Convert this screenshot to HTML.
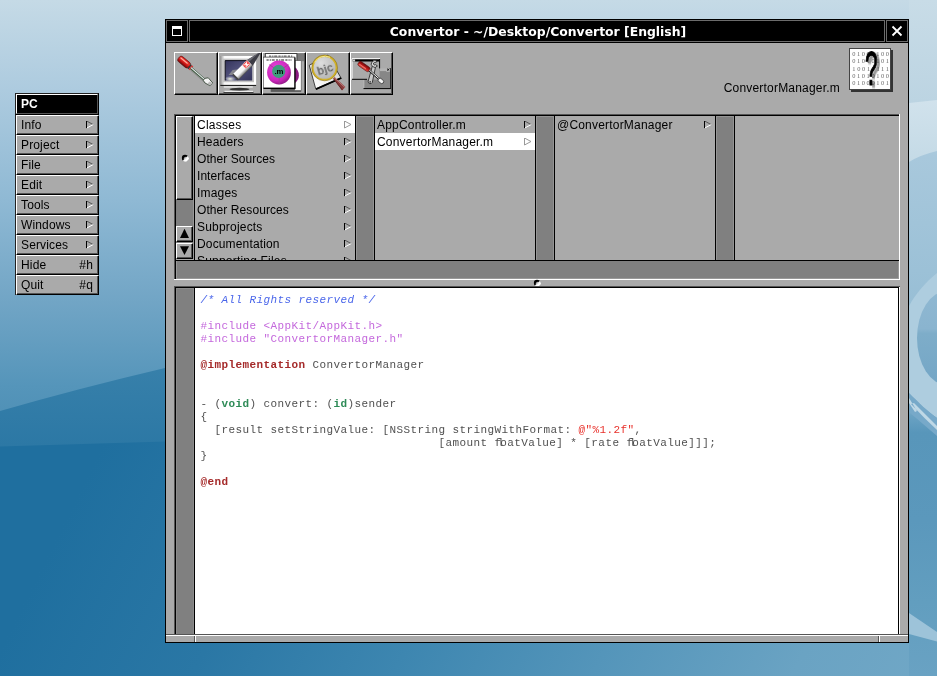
<!DOCTYPE html>
<html><head><meta charset="utf-8"><title>Convertor</title>
<style>
*,*:before,*:after{box-sizing:border-box;margin:0;padding:0}
html,body{width:937px;height:676px;overflow:hidden}
body{position:relative;font-family:"Liberation Sans",sans-serif;font-size:12px;color:#000;background:#3b80aa}
body>div,body>svg,#all>div,#all>svg{position:absolute}
#bg{left:0;top:0;width:937px;height:676px}
/* menu */
.mt{left:15px;top:93px;width:84px;height:22px;background:#000;border:1px solid #222;border-right-color:#000;border-bottom-color:#000;color:#fff;font-weight:bold;font-size:12px;line-height:21px;padding-left:5px}
.mt:after{content:"";position:absolute;left:0;top:0;width:82px;height:20px;border-left:1px solid #fff;border-top:1px solid #fff;border-right:1px solid #555;border-bottom:1px solid #555}
#mshade{left:15px;top:115px;width:1px;height:180px;background:#222}
.mi{left:16px;width:83px;height:20px;letter-spacing:.15px;background:#aaa;border:1px solid #000;border-top-color:#fff;border-left-color:#fff;line-height:19px;padding-left:4px;font-size:12px}
.mi:after,.tool:after,.bez:after{content:"";position:absolute;left:0;top:0;right:0;bottom:0;border-right:1px solid #555;border-bottom:1px solid #555}
.mi .key{position:absolute;right:5px;top:0}
.mi svg{position:absolute;left:69px;top:5px}
/* window */
#win{left:165px;top:19px;width:744px;height:624px;background:#aaa;border:1px solid #000}
#tb{left:166px;top:20px;width:742px;height:23px;background:#000;border-bottom:1px solid #000}
.tbtn{top:20px;height:22px;background:#000;border:1px solid #6c6c6c}
#title{left:189px;top:20px;width:696px;height:22px;border:1px solid #6c6c6c;color:#fff;font-family:"DejaVu Sans",sans-serif;font-weight:bold;font-size:12.4px;text-align:center;line-height:21px;padding-left:2px;white-space:nowrap}
.tool{top:52px;width:44px;height:43px;background:#aaa;border:1px solid #000;border-top-color:#fff;border-left-color:#fff;overflow:hidden}
.tool svg{position:absolute;left:-1px;top:-1px}
#fname{left:640px;top:81px;width:200px;text-align:right;font-size:12px;line-height:14px;letter-spacing:.2px}
/* browser */
.col{top:116px;height:144px;background:#aaa;overflow:hidden}
.row{position:absolute;left:0;right:0;height:17px;line-height:19px;padding-left:2px;font-size:12px;white-space:nowrap;letter-spacing:.2px;overflow:hidden}
.row.sel{background:#fff}
.row svg{position:absolute;left:149px;top:5px}
.slot{background:#808080}
.k0{background:#000}.k5{background:#555}.kf{background:#fff}.ka{background:#aaa}
.bez{background:#aaa;border:1px solid #000;border-top-color:#fff;border-left-color:#fff}
/* editor */
#code{left:195px;top:288px;width:703px;height:346px;background:#fff;overflow:hidden}
pre{position:absolute;left:5.5px;top:6px;font-family:"Liberation Mono",monospace;font-size:11px;letter-spacing:0.4px;line-height:13px;color:#505050}
.c{color:#4a66ea;font-style:italic}
.p{color:#c468dc}
.k{color:#a52a2a;font-weight:bold}
.t{color:#2e8b57;font-weight:bold}
.s{color:#e8302a}
.fl{letter-spacing:-3.7px}
</style></head><body><div id="all" style="left:0;top:0;width:937px;height:676px;will-change:transform">
<svg id="bg" width="937" height="676" viewBox="0 0 937 676">
<defs>
<linearGradient id="g1" gradientUnits="userSpaceOnUse" x1="0" y1="0" x2="0" y2="676"><stop offset="0" stop-color="#c5dae6"/><stop offset="0.133" stop-color="#adcbdf"/><stop offset="0.296" stop-color="#8fb9d4"/><stop offset="0.438" stop-color="#73a6c6"/><stop offset="0.571" stop-color="#5595ba"/><stop offset="0.62" stop-color="#4f90b6"/></linearGradient>
<linearGradient id="g2" gradientUnits="userSpaceOnUse" x1="0" y1="0" x2="2000" y2="1000"><stop offset="0.13" stop-color="#1f6f9f"/><stop offset="0.212" stop-color="#2a77a5"/><stop offset="0.292" stop-color="#3d86b0"/><stop offset="0.372" stop-color="#5495ba"/><stop offset="0.452" stop-color="#6aa3c3"/><stop offset="0.507" stop-color="#70a7c6"/></linearGradient>
<linearGradient id="gb" gradientUnits="userSpaceOnUse" x1="0" y1="368" x2="0" y2="446"><stop offset="0" stop-color="#3780aa"/><stop offset="1" stop-color="#2c78a5"/></linearGradient>
<linearGradient id="g3" gradientUnits="userSpaceOnUse" x1="0" y1="0" x2="0" y2="676"><stop offset="0" stop-color="#c8dce7"/><stop offset="0.15" stop-color="#bcd4e2"/><stop offset="0.232" stop-color="#a8c8dc"/><stop offset="0.4" stop-color="#9cc1d7"/><stop offset="0.6" stop-color="#8db7d0"/><stop offset="0.615" stop-color="#6aa2c3"/><stop offset="0.64" stop-color="#5896ba"/><stop offset="0.77" stop-color="#5b98bc"/><stop offset="0.89" stop-color="#629ebf"/><stop offset="1" stop-color="#69a2c3"/></linearGradient>
<linearGradient id="gw" x1="0" y1="0" x2="0" y2="1"><stop offset="0" stop-color="#d1e2ec"/><stop offset="1" stop-color="#c4dae6"/></linearGradient><linearGradient id="gi" x1="0" y1="0" x2="0" y2="1"><stop offset="0" stop-color="#8fb8d2"/><stop offset=".4" stop-color="#8ab4cf"/><stop offset=".45" stop-color="#7eadc9"/><stop offset="1" stop-color="#74a6c6"/></linearGradient><clipPath id="cr"><rect x="909" y="0" width="28" height="676"/></clipPath>
</defs>
<rect width="937" height="676" fill="url(#g1)"/>
<path d="M0 411Q80 388 165 368V470H0Z" fill="url(#gb)"/>
<path d="M0 446.5L165 441.5V676H0Z" fill="url(#g2)"/>
<rect x="0" y="643" width="937" height="33" fill="url(#g2)"/>
<g clip-path="url(#cr)">
<rect x="909" y="0" width="28" height="676" fill="url(#g3)"/>
<path d="M909 103L937 100V151Q920 155 909 162Z" fill="url(#gw)"/>
<path d="M937 273C927 281 915 294 909 306V393C918 402 928 412 937 418Z" fill="#aecddf"/>
<ellipse cx="947" cy="338" rx="30" ry="47" fill="url(#gi)"/>
<path d="M909 393C918 402 928 412 937 418V436L909 412Z" fill="#77a9c9"/>
<path d="M909 398L917 411L915 412L909 403ZM911 404Q924 418 937 430V426Q925 414 914 403Z" fill="#bfd8e6"/>
<path d="M909 613L937 632V641.5L909 634Z" fill="#9dc3d9"/>
</g>
</svg>

<div class="mt">PC</div><div id="mshade"></div>
<div class="mi" style="top:115px">Info<svg width="9" height="9"><use href="#ar"/></svg></div>
<div class="mi" style="top:135px">Project<svg width="9" height="9"><use href="#ar"/></svg></div>
<div class="mi" style="top:155px">File<svg width="9" height="9"><use href="#ar"/></svg></div>
<div class="mi" style="top:175px">Edit<svg width="9" height="9"><use href="#ar"/></svg></div>
<div class="mi" style="top:195px">Tools<svg width="9" height="9"><use href="#ar"/></svg></div>
<div class="mi" style="top:215px">Windows<svg width="9" height="9"><use href="#ar"/></svg></div>
<div class="mi" style="top:235px">Services<svg width="9" height="9"><use href="#ar"/></svg></div>
<div class="mi" style="top:255px">Hide<span class="key">#h</span></div>
<div class="mi" style="top:275px">Quit<span class="key">#q</span></div>

<svg width="0" height="0" style="left:0;top:0"><defs>
<g id="ar"><path d="M.5 -.2V7.1" stroke="#000" stroke-width="1" fill="none"/><path d="M1 .2L7 3.5" stroke="#555" stroke-width="1" fill="none"/><path d="M1 6.9L7.2 3.6" stroke="#fff" stroke-width="1" fill="none"/></g><g id="ars"><path d="M.5 0V7L7 3.5Z" stroke="#999" stroke-width="1" fill="#fff"/></g>
</defs></svg>

<div id="win"></div>
<div id="tb"></div>
<div class="tbtn" style="left:166px;width:22px"><svg width="20" height="20" style="position:absolute;left:0;top:0"><rect x="5.5" y="6.5" width="9" height="8" fill="none" stroke="#fff"/><rect x="5" y="5" width="10" height="3" fill="#fff"/></svg></div>
<div id="title">Convertor - ~/Desktop/Convertor [English]</div>
<div class="tbtn" style="left:886px;width:22px"><svg width="20" height="20" style="position:absolute;left:0;top:0"><path d="M5.5 5.5L14.5 14.5M14.5 5.5L5.5 14.5" stroke="#fff" stroke-width="1.8" fill="none"/></svg></div>

<div class="tool" style="left:174px"><svg width="44" height="43"><defs><linearGradient id="rh" x1="0" y1="0" x2="1" y2="0"><stop offset="0" stop-color="#6a0808"/><stop offset="0.35" stop-color="#c81414"/><stop offset="0.7" stop-color="#f03a30"/><stop offset="1" stop-color="#d01818"/></linearGradient></defs>
<path d="M17.5 17.5L32 30" stroke="#666" stroke-width="3.2" opacity=".35"/>
<g transform="translate(10.8 10.7) rotate(-50.5)"><rect x="-3.3" y="-7.8" width="6.6" height="13.6" rx="2.4" fill="url(#rh)" stroke="#5a0c0c" stroke-width=".6"/><rect x=".6" y="-6.4" width="1.2" height="9" fill="#ffc0b0" opacity=".85"/><rect x="-2.6" y="5.6" width="5.2" height="1.4" fill="#333"/><rect x="-2.6" y="7" width="5.2" height="1.8" fill="#d83030"/></g>
<path d="M17 16L31 28.2" stroke="#3a5a3a" stroke-width="2.4"/><path d="M17 15.7L31 27.9" stroke="#e8e8f0" stroke-width="1.1"/>
<polygon points="30.6,26.4 34.3,25.8 38.7,31 35.9,33.6 31,31 29.3,28.4" fill="#f4f4f4" stroke="#3c4c3c" stroke-width=".9"/><polygon points="35.6,29.5 38.2,31.2 35.9,33.2 33.5,31.6" fill="#bbb"/>
</svg></div>
<div class="tool" style="left:218px"><svg width="44" height="43"><defs><linearGradient id="scr" x1="0" y1="0" x2="1" y2="1"><stop offset="0" stop-color="#34345c"/><stop offset=".45" stop-color="#50507a"/><stop offset="1" stop-color="#34345a"/></linearGradient><linearGradient id="rk" x1="0" y1="0" x2="0" y2="1"><stop offset="0" stop-color="#fff"/><stop offset=".55" stop-color="#f4f4f4"/><stop offset=".85" stop-color="#999"/><stop offset="1" stop-color="#444"/></linearGradient><linearGradient id="bz" x1="0" y1="0" x2="1" y2="0"><stop offset="0" stop-color="#909090"/><stop offset=".12" stop-color="#f8f8f8"/><stop offset="1" stop-color="#fff"/></linearGradient><radialGradient id="glw" cx=".4" cy=".6" r=".6"><stop offset="0" stop-color="#f4f8e0"/><stop offset="1" stop-color="#c8cce0" stop-opacity="0"/></radialGradient></defs>
<rect x="2.3" y="4" width="35.8" height="29.2" fill="url(#bz)"/>
<rect x="5" y="6.6" width="31" height="23.6" fill="#c4c4c4"/>
<rect x="7.2" y="8.3" width="27" height="20.2" fill="url(#scr)"/><path d="M7.2 28.5V8.6H34.2" fill="none" stroke="#0a0a14" stroke-width=".9"/>
<rect x="2.3" y="32.9" width="35.8" height="1" fill="#111"/>
<rect x="5.8" y="34.2" width="29" height="1.5" fill="#e4e4e4"/>
<ellipse cx="21.5" cy="37.3" rx="10" ry="1.5" fill="#333"/>
<rect x="6.5" y="38.8" width="28.5" height="1.4" fill="#eee"/>
<rect x="5.5" y="40.3" width="30" height="1" fill="#111"/>
<ellipse cx="13.2" cy="26.4" rx="5.4" ry="2.6" fill="url(#glw)"/>
<polygon points="10.6,22.9 14.7,18 21,17.2 17,22.9" fill="#85858c"/>
<g transform="translate(24.8 18) rotate(-45)"><rect x="-10" y="-4" width="20.4" height="8" fill="url(#rk)"/><polygon points="10.2,-4 24.2,-0.6 24.2,0.6 10.2,4" fill="#3c3c44"/><polygon points="10.2,-4 24.2,-0.6 10.2,-1.4" fill="#6a6a72"/><rect x="3.2" y="-3.8" width="6.4" height="5" fill="#f02828" opacity=".9"/><path d="M4 -3.2L8.8 .6M8.8 -3.2L4 .6M6.4 -3.8V1.2" stroke="#fff" stroke-width=".9"/><rect x="-11" y="-4" width="1.8" height="8" fill="#444"/></g>
</svg></div>
<div class="tool" style="left:262px"><svg width="44" height="43"><defs><radialGradient id="mg" cx=".4" cy=".35" r=".75"><stop offset="0" stop-color="#e848dc"/><stop offset=".65" stop-color="#cc28bc"/><stop offset="1" stop-color="#7c1274"/></radialGradient></defs>
<rect x="34.9" y="1.2" width="7.1" height="8" fill="#7a7a7a"/>
<rect x="8.7" y="36.5" width="30.5" height="3.4" fill="#5a5a5a"/>
<rect x="3.3" y="1.6" width="31.6" height="34" fill="#fff" stroke="#222" stroke-width=".8"/>
<path d="M7 4.2H31" stroke="#666" stroke-width="1.3" stroke-dasharray="2.2 1 1.2 .8 3 1.2"/>
<rect x="32.8" y="8.7" width="6.4" height="29.8" fill="#fff" stroke="#555" stroke-width=".6"/>
<path d="M32.6 15A10 10 0 0 1 32.6 31.4Z" fill="#8a1a80"/>
<rect x="1.2" y="5.1" width="31.6" height="31" fill="#fff" stroke="#444" stroke-width=".8"/><path d="M33 5.5V36.4H1.6" fill="none" stroke="#000" stroke-width="1.1"/>
<path d="M4.5 8H29.5" stroke="#666" stroke-width="1.3" stroke-dasharray="2.2 1 1.2 .8 3 1.2"/>
<circle cx="17" cy="20.5" r="11.9" fill="url(#mg)"/>
<path d="M16.7 19.4L7.4 12.6M16.7 19.4L26.4 12.6M17.2 19.4V32.2" stroke="#a04098" stroke-width=".9"/>
<circle cx="16.7" cy="19.4" r="6.6" fill="#3f9c7c"/>
<text x="17" y="21.9" font-family="Liberation Sans,sans-serif" font-weight="bold" font-size="7.8" text-anchor="middle" fill="#000">.m</text>
</svg></div>
<div class="tool" style="left:306px"><svg width="44" height="43"><defs><linearGradient id="pp" x1="0" y1="1" x2=".8" y2="0"><stop offset="0" stop-color="#fff"/><stop offset=".45" stop-color="#f0f0f0"/><stop offset="1" stop-color="#bdbdbd"/></linearGradient><radialGradient id="ln" cx=".35" cy=".3" r=".75"><stop offset="0" stop-color="#dedede"/><stop offset="1" stop-color="#b4b4b4"/></radialGradient><filter id="b4" x="-20%" y="-20%" width="140%" height="140%"><feGaussianBlur stdDeviation=".35"/></filter></defs>
<polygon points="10.6,37.6 35.8,26.4 34.9,25.7 9.7,36.7" fill="#000"/>
<polygon points="3.3,13.3 21.8,3.1 34.9,25.7 9.7,36.7" fill="url(#pp)" stroke="#1a1a1a" stroke-width=".8" stroke-linejoin="round"/>
<path d="M9.9 37.2L35.2 26" stroke="#000" stroke-width="1.5"/>
<polygon points="27.2,26.4 28.6,25 39.4,35 36,38.4" fill="#8a3c3c"/><path d="M28.2 25.6L38.8 35.4" stroke="#c08080" stroke-width=".9"/><path d="M27.4 26.6L36.4 38" stroke="#5a2020" stroke-width=".8"/>
<circle cx="18.6" cy="15.9" r="11.9" fill="url(#ln)" stroke="#d2b22a" stroke-width="1.9"/><circle cx="18.6" cy="15.9" r="12.9" fill="none" stroke="#7a6210" stroke-width=".5"/><path d="M8.6 10.4A11.9 11.9 0 0 1 24 5.3" fill="none" stroke="#f4e890" stroke-width="1"/>
<text x="18.9" y="21.3" font-family="Liberation Sans,sans-serif" font-size="11.6" letter-spacing=".5" text-anchor="middle" fill="#5c5c5c" stroke="#5c5c5c" stroke-width=".3" transform="rotate(-17 18.6 15.9)" filter="url(#b4)">bjc</text>
</svg></div>
<div class="tool" style="left:350px;width:43px"><svg width="44" height="43"><defs><linearGradient id="rh5" x1="0" y1="0" x2="1" y2="0"><stop offset="0" stop-color="#e84a40"/><stop offset=".5" stop-color="#b81818"/><stop offset="1" stop-color="#6a0808"/></linearGradient></defs>
<rect x="13.3" y="16.1" width="27.4" height="20.4" fill="#878787"/><rect x="30" y="16.1" width="10.7" height="3" fill="#b4b4b4"/><path d="M13.8 26.5V36.5" stroke="#c8c8c8" stroke-width=".9"/><path d="M40.8 16.1V36.6H13.5" fill="none" stroke="#000" stroke-width="1"/><path d="M37 16.6L39.4 18.8M39.4 16.6L37 18.8" stroke="#000" stroke-width=".8"/><path d="M36.4 19.2H40" stroke="#fff" stroke-width=".5"/>
<rect x="1.6" y="6.2" width="28" height="21.4" fill="#aaa"/><rect x="2.2" y="7.1" width="27" height="2.4" fill="#000"/><rect x="2.7" y="7.5" width="2.4" height="2" fill="#ccc"/><path d="M2 27.6V6.7H30" stroke="#fff" stroke-width="1" fill="none"/><path d="M2 27.3H17" stroke="#000" stroke-width="1" fill="none"/><path d="M29.6 7V16.4" stroke="#000" stroke-width="1" fill="none"/>
<g transform="translate(24.6 11.8) rotate(15)"><path d="M-1.6 2.6L-1.7 18.6A2.2 2.2 0 0 0 2.6 18.6L1.7 2.6Z" fill="#c8c8c8" stroke="#2a2a2a" stroke-width=".8"/><circle cx=".4" cy="18.6" r=".9" fill="#444"/><path d="M1.8 -2.9A3.4 3.4 0 1 0 3.3 1.4L1.2 .6A1.3 1.3 0 1 1 .4 -1.4Z" fill="#dcdcdc" stroke="#2a2a2a" stroke-width=".8"/></g>
<g transform="translate(14 14.5) rotate(-55)"><rect x="-2.5" y="-6.6" width="5" height="13.2" rx="1.8" fill="url(#rh5)" stroke="#4a0808" stroke-width=".5"/><rect x="-1.3" y="-5.2" width="1" height="8" fill="#ff9a8a" opacity=".7"/></g>
<path d="M19.3 18.4L29.3 27.3" stroke="#222" stroke-width="2.2"/><path d="M19.3 18.1L29.3 27" stroke="#f0f0f0" stroke-width="1"/>
<ellipse cx="30.9" cy="28.9" rx="3.2" ry="2.1" transform="rotate(42 30.9 28.9)" fill="#f2f2f2" stroke="#333" stroke-width=".8"/>
</svg></div>
<div id="ficon" style="left:849px;top:48px;width:44px;height:44px"><svg width="44" height="44"><defs><filter id="bl" x="-50%" y="-50%" width="200%" height="200%"><feGaussianBlur stdDeviation="1.3"/></filter></defs>
<rect x="2" y="2" width="42" height="42" fill="#333"/>
<rect x="0.5" y="0.5" width="41" height="41" fill="#fff" stroke="#444" stroke-width="1"/>
<g font-family="Liberation Serif,serif" font-size="6.4" fill="#686868">
<text x="3.2" y="8.4" textLength="36.8" lengthAdjust="spacing">01000100</text>
<text x="3.2" y="15.4" textLength="36.8" lengthAdjust="spacing">01010101</text>
<text x="3.2" y="22.5" textLength="36.8" lengthAdjust="spacing">10011111</text>
<text x="3.2" y="29.5" textLength="36.8" lengthAdjust="spacing">01010100</text>
<text x="3.2" y="36.5" textLength="36.8" lengthAdjust="spacing">01000101</text></g>
<text x="0" y="0" transform="translate(18.8 39.4) scale(.47 1)" font-family="Liberation Sans,sans-serif" font-size="48" fill="#000" stroke="#000" stroke-width="1.6" opacity=".4" filter="url(#bl)">?</text>
<text x="0" y="0" transform="translate(15.9 37.2) scale(.47 1)" font-family="Liberation Sans,sans-serif" font-size="48" fill="#000" stroke="#000" stroke-width="1.2">?</text>
</svg></div>
<div id="fname">ConvertorManager.m</div>

<!-- browser frame -->
<div class="k5" style="left:174px;top:114px;width:726px;height:166px"></div>
<div class="kf" style="left:175px;top:115px;width:725px;height:165px"></div>
<div class="k0" style="left:175px;top:115px;width:724px;height:164px"></div><div class="kf" style="left:174px;top:279px;width:2px;height:1px"></div><div class="kf" style="left:899px;top:114px;width:1px;height:2px"></div>
<div class="ka" style="left:176px;top:116px;width:723px;height:144px"></div>
<div class="slot" style="left:176px;top:261px;width:723px;height:18px;border:1px solid #999;border-top:0"></div>
<!-- col separators / scroller slots -->
<div class="slot" style="left:176px;top:116px;width:18px;height:144px;border-right:1px solid #999"></div>
<div class="k0" style="left:194px;top:116px;width:1px;height:144px"></div>
<div class="k0" style="left:355px;top:116px;width:20px;height:144px"></div><div class="slot" style="left:356px;top:116px;width:18px;height:144px;border:1px solid #959595;border-bottom:0"></div>
<div class="k0" style="left:535px;top:116px;width:20px;height:144px"></div><div class="slot" style="left:536px;top:116px;width:18px;height:144px;border:1px solid #959595;border-bottom:0"></div>
<div class="k0" style="left:715px;top:116px;width:20px;height:144px"></div><div class="slot" style="left:716px;top:116px;width:18px;height:144px;border:1px solid #959595;border-bottom:0"></div>
<!-- scroller knob + buttons -->
<div class="bez" style="left:176px;top:116px;width:17px;height:84px"><svg width="8" height="8" style="position:absolute;left:4px;top:37px"><use href="#dim"/></svg></div>
<div class="bez" style="left:176px;top:226px;width:17px;height:16px"><svg width="15" height="14" style="position:absolute;left:0;top:0"><polygon points="7.5,1.8 12,10.9 3,10.9" fill="#000"/></svg></div>
<div class="bez" style="left:176px;top:243px;width:17px;height:16px"><svg width="15" height="14" style="position:absolute;left:0;top:0"><polygon points="3,2.3 12,2.3 7.5,10.9" fill="#000"/></svg></div>
<div class="ka" style="left:176px;top:259px;width:18px;height:1px"></div>
<svg width="0" height="0" style="left:0;top:0"><defs>
<linearGradient id="dg" x1="0" y1="0" x2="1" y2="1"><stop offset="0" stop-color="#555"/><stop offset=".45" stop-color="#ddd"/><stop offset=".6" stop-color="#fff"/></linearGradient><g id="dim"><circle cx="4" cy="4" r="3.15" fill="#000"/><path d="M6.6 1.9A3.15 3.15 0 0 1 1.9 6.6Z" fill="#fff"/><circle cx="4.8" cy="4.8" r="2.1" fill="url(#dg)"/></g>
</defs></svg>

<div class="col" style="left:195px;width:160px">
<div class="row sel" style="top:0;letter-spacing:0.26px">Classes<svg width="9" height="9"><use href="#ars"/></svg></div>
<div class="row" style="top:17px">Headers<svg width="9" height="9"><use href="#ar"/></svg></div>
<div class="row" style="top:34px;letter-spacing:0.05px">Other Sources<svg width="9" height="9"><use href="#ar"/></svg></div>
<div class="row" style="top:51px;letter-spacing:0.05px">Interfaces<svg width="9" height="9"><use href="#ar"/></svg></div>
<div class="row" style="top:68px">Images<svg width="9" height="9"><use href="#ar"/></svg></div>
<div class="row" style="top:85px;letter-spacing:0.08px">Other Resources<svg width="9" height="9"><use href="#ar"/></svg></div>
<div class="row" style="top:102px">Subprojects<svg width="9" height="9"><use href="#ar"/></svg></div>
<div class="row" style="top:119px;letter-spacing:0.15px">Documentation<svg width="9" height="9"><use href="#ar"/></svg></div>
<div class="row" style="top:136px">Supporting Files<svg width="9" height="9"><use href="#ar"/></svg></div>
</div>
<div class="col" style="left:375px;width:160px">
<div class="row" style="top:0">AppController.m<svg width="9" height="9"><use href="#ar"/></svg></div>
<div class="row sel" style="top:17px">ConvertorManager.m<svg width="9" height="9"><use href="#ars"/></svg></div>
</div>
<div class="col" style="left:555px;width:160px">
<div class="row" style="top:0">@ConvertorManager<svg width="9" height="9"><use href="#ar"/></svg></div>
</div>

<!-- split dimple -->
<svg width="8" height="8" style="left:533px;top:279px"><use href="#dim"/></svg>

<!-- editor frame -->
<div class="k5" style="left:174px;top:286px;width:726px;height:348px"></div>
<div class="kf" style="left:899px;top:287px;width:1px;height:347px"></div>
<div class="k0" style="left:175px;top:287px;width:724px;height:347px"></div>
<div class="slot" style="left:176px;top:288px;width:18px;height:346px;border:1px solid #8c8c8c;border-bottom:0"></div>
<div id="code"><pre><span class="c">/* All Rights reserved */</span>

<span class="p">#include &lt;AppKit/AppKit.h&gt;</span>
<span class="p">#include "ConvertorManager.h"</span>

<span class="k">@implementation</span> ConvertorManager


- (<span class="t">void</span>) convert: (<span class="t">id</span>)sender
{
  [result setStringValue: [NSString stringWithFormat: <span class="s">@"%1.2f"</span>,
                                  [amount <span class="fl">fl</span>oatValue] * [rate <span class="fl">fl</span>oatValue]]];
}

<span class="k">@end</span>
</pre></div>
<!-- resize bar -->
<div class="k5" style="left:166px;top:634px;width:742px;height:1px"></div>
<div class="kf" style="left:166px;top:635px;width:742px;height:1px"></div>
<div class="ka" style="left:166px;top:636px;width:742px;height:6px"></div>
<div class="k5" style="left:194px;top:636px;width:1px;height:6px"></div><div class="kf" style="left:195px;top:636px;width:1px;height:6px"></div>
<div class="k5" style="left:878px;top:636px;width:1px;height:6px"></div><div class="kf" style="left:879px;top:636px;width:1px;height:6px"></div>
</div></body></html>
